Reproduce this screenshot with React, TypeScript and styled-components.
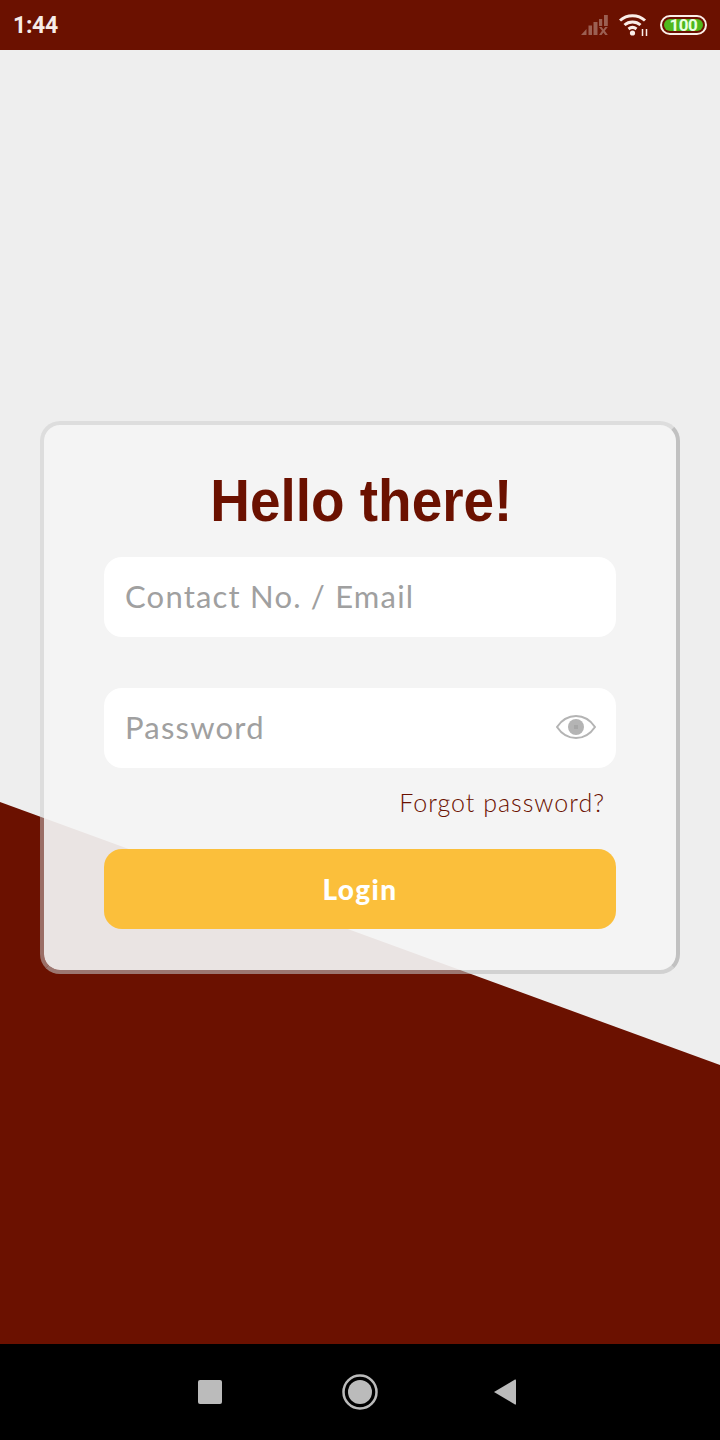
import React from 'react'
import styled, { createGlobalStyle } from 'styled-components'

const GlobalStyle = createGlobalStyle`
  html, body {
    margin: 0;
    padding: 0;
    background: #000;
  }
  * {
    box-sizing: border-box;
  }
`

const Screen = styled.div`
  width: 720px;
  height: 1440px;
  display: flex;
  flex-direction: column;
  overflow: hidden;
`

const StatusBar = styled.div`
  height: 50px;
  flex: none;
  padding: 0 13px 0 13px;
  display: flex;
  align-items: center;
  justify-content: space-between;
  background: #6b1100;
`

const Clock = styled.span`
  font-family: Roboto, sans-serif;
  font-weight: 700;
  font-size: 23px;
  letter-spacing: -0.3px;
  color: #f6ece8;
`

const StatusIcons = styled.div`
  display: flex;
  align-items: center;
  gap: 11px;
`

const Battery = styled.div`
  width: 47px;
  height: 20px;
  padding: 2px;
  border: 2px solid #fbeee8;
  border-radius: 10px;
  display: flex;
`

const BatteryFill = styled.div`
  flex: 1;
  border-radius: 7px;
  background: #4fb81c;
  display: flex;
  align-items: center;
  justify-content: center;
  font-family: Roboto, sans-serif;
  font-weight: 700;
  font-size: 17px;
  letter-spacing: -0.5px;
  line-height: 1;
  color: #e9ffe0;
`

const Main = styled.main`
  position: relative;
  flex: 1;
  display: flex;
  align-items: center;
  justify-content: center;
  background: #eeeeee;

  &::before {
    content: '';
    position: absolute;
    inset: 0;
    background: #6b1100;
    clip-path: polygon(0 752px, 720px 1015px, 720px 100%, 0 100%);
  }
`

const Card = styled.div`
  position: relative;
  width: 640px;
  height: 553px;
  padding: 0 60px;
  display: flex;
  flex-direction: column;
  background: rgba(244, 244, 244, 0.93);
  background-clip: padding-box;
  border: 4px solid rgba(205, 205, 205, 0.5);
  border-right-color: rgba(190, 190, 190, 0.95);
  border-bottom-color: rgba(190, 190, 190, 0.6);
  border-radius: 20px;
`

const Title = styled.h1`
  margin: 41px 0 21px;
  padding-left: 3px;
  font-family: 'Liberation Sans', Arial, sans-serif;
  font-weight: 700;
  font-size: 60px;
  line-height: 70px;
  text-align: center;
  color: #6b1100;
  transform: scaleX(0.915);
`

const Field = styled.div<{ $spaced?: boolean }>`
  height: 80px;
  margin-top: ${props => (props.$spaced ? '51px' : '0')};
  padding: 0 20px 2px 21px;
  display: flex;
  align-items: center;
  justify-content: space-between;
  background: #fff;
  border-radius: 18px;
`

const Placeholder = styled.span`
  font-family: Lato, sans-serif;
  font-size: 31px;
  letter-spacing: 1.2px;
  color: #a0a0a0;
`

const ForgotLink = styled.a`
  align-self: flex-end;
  margin: 18px 11px 0 0;
  font-family: Lato, sans-serif;
  font-weight: 300;
  font-size: 25px;
  line-height: 32px;
  letter-spacing: 1px;
  color: #6b1100;
`

const LoginButton = styled.button`
  height: 80px;
  margin-top: 31px;
  padding-left: 6px;
  border: 0;
  border-radius: 18px;
  background: #fbbf3b;
  font-family: Lato, sans-serif;
  font-weight: 900;
  font-size: 28px;
  letter-spacing: 1.4px;
  color: #fff;
`

const NavBar = styled.div`
  height: 96px;
  flex: none;
  padding: 0 203px 0 198px;
  display: flex;
  align-items: center;
  justify-content: space-between;
  background: #000;
`

const HomeSvg = styled.svg`
  margin-left: 4px;
`

const SignalIcon = () => (
  <svg width="27" height="20" viewBox="0 0 27 20" fill="#9b5f52">
    <path d="M0 20 L5.5 14 V20 Z" />
    <rect x="7.5" y="10.5" width="3.5" height="9.5" />
    <rect x="12.5" y="7" width="4" height="13" />
    <rect x="18" y="4" width="3.2" height="7" />
    <rect x="23" y="0" width="3.8" height="11" />
    <path d="M18 12 h2.6 l1.8 2.4 1.8-2.4 h2.6 l-3 3.8 3 4.2 h-2.6 l-1.8-2.6-1.8 2.6 h-2.6 l3-4.2 Z" />
  </svg>
)

const WifiIcon = () => (
  <svg width="30" height="22" viewBox="0 0 30 22" fill="none" stroke="#fbeee8" strokeWidth="3">
    <path d="M1 6.5 C8 0 19 0 26 6.5" />
    <path d="M5.5 11 C10 7 17 7 21.5 11" />
    <path d="M9.5 15 C12 13 15 13 17.5 15" />
    <circle cx="13.5" cy="19" r="2.6" fill="#fbeee8" stroke="none" />
    <path d="M23.5 15 v7 M27.5 15 v7" strokeWidth="1.5" />
  </svg>
)

const EyeIcon = () => (
  <svg width="40" height="26" viewBox="0 0 40 26" fill="none">
    <path
      d="M1 13 C6 5.5 13 2 20 2 C27 2 34 5.5 39 13 C34 20.5 27 24 20 24 C13 24 6 20.5 1 13 Z"
      stroke="#b4b4b4"
      strokeWidth="2"
    />
    <circle cx="20" cy="13" r="8" fill="#b4b4b4" />
    <rect x="18" y="11" width="4" height="4" fill="#a6a6a6" />
  </svg>
)

const SquareIcon = () => (
  <svg width="24" height="24" viewBox="0 0 24 24">
    <rect width="24" height="24" rx="2" fill="#bbbbbb" />
  </svg>
)

const CircleIcon = () => (
  <HomeSvg width="36" height="36" viewBox="0 0 36 36">
    <circle cx="18" cy="18" r="16.5" fill="none" stroke="#bbbbbb" strokeWidth="2.5" />
    <circle cx="18" cy="18" r="12" fill="#bbbbbb" />
  </HomeSvg>
)

const BackIcon = () => (
  <svg width="24" height="28" viewBox="0 0 24 28">
    <path d="M1 14 L22 1.5 Q23 1 23 2.5 V25.5 Q23 27 22 26.5 Z" fill="#bbbbbb" />
  </svg>
)

const App: React.FC = () => (
  <Screen>
    <GlobalStyle />
    <StatusBar>
      <Clock>1:44</Clock>
      <StatusIcons>
        <SignalIcon />
        <WifiIcon />
        <Battery>
          <BatteryFill>100</BatteryFill>
        </Battery>
      </StatusIcons>
    </StatusBar>
    <Main>
      <Card>
        <Title>Hello there!</Title>
        <Field>
          <Placeholder>Contact No. / Email</Placeholder>
        </Field>
        <Field $spaced>
          <Placeholder>Password</Placeholder>
          <EyeIcon />
        </Field>
        <ForgotLink>Forgot password?</ForgotLink>
        <LoginButton>Login</LoginButton>
      </Card>
    </Main>
    <NavBar>
      <SquareIcon />
      <CircleIcon />
      <BackIcon />
    </NavBar>
  </Screen>
)

export default App
